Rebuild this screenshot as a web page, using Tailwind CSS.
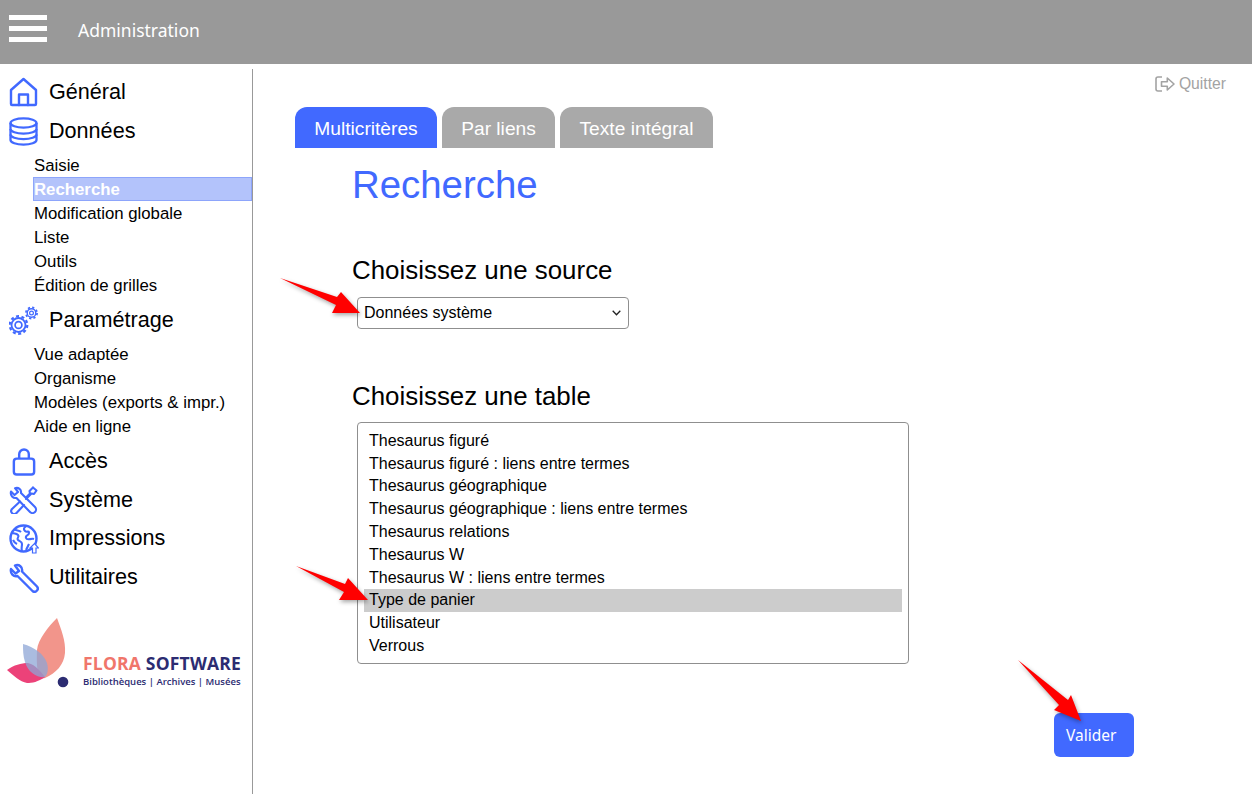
<!DOCTYPE html>
<html lang="fr">
<head>
<meta charset="utf-8">
<script src="https://cdn.jsdelivr.net/npm/@tailwindcss/browser@4"></script>
<title>Administration</title>
</head>
<body class="bg-white text-black overflow-hidden font-['Liberation_Sans',Arial,sans-serif]">
<div class="relative w-[1252px] h-[794px] overflow-hidden">
  <header class="h-16 bg-[#999999] flex items-center">
    <div class="ml-[9px] w-[38px] flex flex-col gap-[6px] -mt-[8px]">
      <span class="block h-[5px] bg-white"></span>
      <span class="block h-[5px] bg-white"></span>
      <span class="block h-[5px] bg-white"></span>
    </div>
    <span class="ml-[31px] -mt-[4px] text-white text-[17.5px] font-['Noto_Sans',sans-serif]">Administration</span>
  </header>
  <div class="flex h-[730px]">
    <aside class="w-[253px] shrink-0 mt-[5px] border-r border-[#999999] text-[#000]">
      <div class="h-[39px] mt-[2px] flex items-center">
        <svg class="ml-[9px] w-[29px] h-[30px] text-[#4169ff] mt-[3px]" viewBox="0 0 29 30" fill="none" stroke="currentColor" stroke-width="2.4" stroke-linejoin="round" stroke-linecap="round"><path d="M2 27V13L14.5 2 27 13V27a1 1 0 0 1-1 1H3a1 1 0 0 1-1-1z"/><path d="M10 28V17.5h9V28"/></svg>
        <span class="ml-[11px] text-[21.6px] mt-[4px]">Général</span>
      </div>
      <div class="h-[39px] flex items-center">
        <svg class="ml-[9px] w-[29px] h-[29px] text-[#4169ff] mt-[3px]" viewBox="0 0 29 29" fill="none" stroke="currentColor" stroke-width="2.3"><ellipse cx="14.5" cy="6" rx="13" ry="4.6"/><path d="M1.5 6v17c0 2.6 5.8 4.6 13 4.6s13-2 13-4.6V6"/><path d="M1.5 12c0 2.6 5.8 4.6 13 4.6s13-2 13-4.6"/><path d="M1.5 17.5c0 2.6 5.8 4.6 13 4.6s13-2 13-4.6"/></svg>
        <span class="ml-[11px] text-[21.6px] mt-[4px]">Données</span>
      </div>
      <ul class="text-[16.8px] leading-[26px] mt-[4px] ml-[33px]">
        <li class="h-6 pl-px">Saisie</li>
        <li class="h-6 bg-[#b3c3fb] border border-[#8da5fb] text-white font-bold leading-[24px]">Recherche</li>
        <li class="h-6 pl-px">Modification globale</li>
        <li class="h-6 pl-px">Liste</li>
        <li class="h-6 pl-px">Outils</li>
        <li class="h-6 pl-px">Édition de grilles</li>
      </ul>
      <div class="h-[39px] mt-[3px] flex items-center">
        <svg class="ml-[9px] w-[30px] h-[30px] text-[#4169ff]" viewBox="0 0 30 30" fill="none" stroke="currentColor"><circle cx="9.5" cy="20" r="3.4" stroke-width="1.7"/><circle cx="9.500" cy="20" r="7" stroke-width="1.8"/><circle cx="9.500" cy="20" r="8.800" stroke-width="2.200" stroke-dasharray="3 2.530"/><circle cx="22.500" cy="8" r="1.900" stroke-width="1.200"/><circle cx="22.500" cy="8" r="4.300" stroke-width="1.400"/><circle cx="22.500" cy="8" r="5.600" stroke-width="1.700" stroke-dasharray="2.200 2.200"/></svg>
        <span class="ml-[10px] text-[21.6px] mt-[2px]">Paramétrage</span>
      </div>
      <ul class="text-[16.8px] leading-[26px] mt-[3px] ml-[33px]">
        <li class="h-6 pl-px">Vue adaptée</li>
        <li class="h-6 pl-px">Organisme</li>
        <li class="h-6 pl-px">Modèles (exports &amp; impr.)</li>
        <li class="h-6 pl-px">Aide en ligne</li>
      </ul>
      <div class="h-[39px] mt-[3px] flex items-center">
        <svg class="ml-[12px] w-[24px] h-[28px] text-[#4169ff] mt-[3px]" viewBox="0 0 24 29" fill="none" stroke="currentColor" stroke-width="2.5" stroke-linejoin="round"><rect x="1.5" y="11" width="21" height="16.5" rx="3"/><path d="M7 11V6.500a5 5 0 0 1 10 0V11"/></svg>
        <span class="ml-[13px] text-[21.6px] mt-[2px]">Accès</span>
      </div>
      <div class="h-[39px] flex items-center">
        <svg class="ml-[9px] w-[29px] h-[28px] text-[#4169ff] mt-[1px]" viewBox="0 0 29 28" fill="none" stroke="currentColor" stroke-width="2.1" stroke-linejoin="round" stroke-linecap="round"><path d="M2 5.500 5.500 9 9 6 6 2.200C9.500 1 12.500 3.500 12 7l14 14a3.500 3.500 0 0 1-5 5L7.500 12C4 12.500 1 9.500 2 5.500z"/><path d="M24 1.500 27.500 4.500 25 8 22.500 7.500 17 13"/><path d="M24 1.500 20.500 5 21 7.500 17 11.500"/><path d="M11 15.500 3 23a3 3 0 0 0 4.500 4L15 19"/></svg>
        <span class="ml-[11px] text-[21.6px] mt-[2px]">Système</span>
      </div>
      <div class="h-[38px] flex items-center">
        <svg class="ml-[9px] w-[30px] h-[30px] text-[#4169ff] mt-[2px]" viewBox="0 0 30 30" fill="none" stroke="currentColor" stroke-width="2.400"><circle cx="14.500" cy="14.500" r="13"/><path d="M3 9c3 1 4 0 6 2s-2 3 0 5 4 1 4 4-1 4 0 7" stroke-width="2.100"/><path d="M17 2c-2 2-3 3-1 5s4-1 4 2-4 2-3 5 5 0 8 1" stroke-width="2.100"/><path d="M5 5c2 2 5 1 7 3M8 20c-2-1-3-2-4-4M20 20c-1 2-2 4-3 6" stroke-width="2.100"/><path d="M25.500 19.500 29.500 24h-2.500v5h-3.500v-5h-2.500z" fill="#fff" stroke-width="1.200"/></svg>
        <span class="ml-[10px] text-[21.6px]">Impressions</span>
      </div>
      <div class="h-[39px] flex items-center">
        <svg class="ml-[9px] w-[30px] h-[30px] text-[#4169ff] mt-[2px]" viewBox="0 0 30 30" fill="none" stroke="currentColor" stroke-width="2.400" stroke-linejoin="round"><path d="M2 6l4.500 4.500L10 8 6 2.500C10 1 14 4 13 8.500L28 23.500a3.200 3.200 0 0 1-4.500 4.500L8.500 13C4.500 14 1 10.500 2 6z"/></svg>
        <span class="ml-[10px] text-[21.6px] mt-[2px]">Utilitaires</span>
      </div>
      <div class="mt-[22px] ml-[6px] flex h-[74px]">
        <svg class="w-[70px] h-[74px] shrink-0" viewBox="0 0 70 74">
          <path d="M51 0C55 11 60 23 59 35 58 47 50 55 39 60 33 62 30 55 31 32 32 21 43 8 51 0z" fill="#f2958b"/>
          <path d="M1 52C8 47 15 45 22 45 30 47 35 54 39 59 32 64 26 65 21 65 14 64 7 57 1 52z" fill="#ec4279"/>
          <path d="M17 26C28 29 38 36 41 45 43 52 41 57 39 59 32 60 22 55 19 44 17 38 17 32 17 26z" fill="#8ea6d6" fill-opacity=".75"/>
          <circle cx="57" cy="64" r="5.300" fill="#2c2c72"/>
        </svg>
        <div class="ml-[7px] mt-[35px]">
          <div class="text-[17.500px] leading-[20px] font-bold tracking-[.2px] font-['Open_Sans',sans-serif] whitespace-nowrap"><span class="text-[#f0766b]">FLORA</span> <span class="text-[#2c2c72]">SOFTWARE</span></div>
          <div class="mt-[2px] text-[9.500px] leading-[14px] font-semibold text-[#2c2c72] font-['Open_Sans',sans-serif] whitespace-nowrap">Bibliothèques | Archives | Musées</div>
        </div>
      </div>
    </aside>
    <main class="flex-1 relative">
      <div class="flex justify-end pr-[26px] h-[43px] pt-[10px]">
        <div class="flex items-center gap-[4px] text-[#a3a3a3] text-[15.700px] h-5">
          <svg class="w-5 h-[18px]" viewBox="0 0 20 18" fill="none" stroke="currentColor" stroke-width="1.600" stroke-linejoin="round"><path d="M7 2H3a2 2 0 0 0-2 2v10a2 2 0 0 0 2 2h4"/><path d="M6.500 6.800h5.800V3L19 9l-6.700 6v-3.800H6.500z"/></svg>
          <span>Quitter</span>
        </div>
      </div>
      <nav class="flex gap-[5px] ml-[42px] text-[19.2px] text-white">
        <div class="h-[41px] w-[142px] pt-[3px] rounded-t-[12px] bg-[#4169ff] flex items-center justify-center">Multicritères</div>
        <div class="h-[41px] w-[113px] pt-[3px] rounded-t-[12px] bg-[#a9a9a9] flex items-center justify-center">Par liens</div>
        <div class="h-[41px] w-[153px] pt-[3px] rounded-t-[12px] bg-[#a9a9a9] flex items-center justify-center">Texte intégral</div>
      </nav>
      <section class="ml-[99px]">
        <h1 class="text-[38.400px] leading-[42px] mt-[16px] text-[#4169ff]">Recherche</h1>
        <h2 class="text-[25.900px] leading-[30px] mt-[49px]">Choisissez une source</h2>
        <div class="relative ml-[5px] mt-[12px] w-[272px] h-[32px]">
          <select class="block appearance-none w-full h-full border border-[#8f8f8f] rounded-[4px] bg-white text-[16px] pl-[6px]">
            <option>Données système</option>
          </select>
          <svg class="absolute right-[8px] top-[13px] w-[9px] h-[6px] pointer-events-none" viewBox="0 0 9 6" fill="none" stroke="#222222" stroke-width="1.300"><path d="M.7 .8 4.500 4.800 8.300 .8"/></svg>
        </div>
        <h2 class="text-[25.900px] leading-[30px] mt-[52px]">Choisissez une table</h2>
        <div class="ml-[5px] mt-[11px] w-[552px] h-[242px] border border-[#8f8f8f] rounded-[4px] pt-[6.800px] px-[6px] text-[16px] leading-[22.800px]">
          <div class="pl-[5px]">Thesaurus figuré</div>
          <div class="pl-[5px]">Thesaurus figuré : liens entre termes</div>
          <div class="pl-[5px]">Thesaurus géographique</div>
          <div class="pl-[5px]">Thesaurus géographique : liens entre termes</div>
          <div class="pl-[5px]">Thesaurus relations</div>
          <div class="pl-[5px]">Thesaurus W</div>
          <div class="pl-[5px]">Thesaurus W : liens entre termes</div>
          <div class="pl-[5px] bg-[#cccccc]">Type de panier</div>
          <div class="pl-[5px]">Utilisateur</div>
          <div class="pl-[5px]">Verrous</div>
        </div>
      </section>
      <div class="ml-[801px] mt-[49px] w-20 h-[44px] pt-[2px] rounded-[6px] bg-[#4169ff] text-white text-[15.500px] font-['Noto_Sans',sans-serif] flex items-center pl-[12px]">Valider</div>
    </main>
  </div>
  <svg class="absolute left-0 top-0 w-[1252px] h-[794px] pointer-events-none drop-shadow-[1px_2px_2px_rgba(0,0,0,0.35)]" viewBox="0 0 1252 794">
    <polygon fill="#ff0000" points="280,278 337,297 341,292 360,313 332,313 336,305"/>
    <polygon fill="#ff0000" points="296,566 345,584 348,578 368,600 339,600 344,592"/>
    <polygon fill="#ff0000" points="1018,660 1068,700 1071,695 1081,721 1054,710 1059,705"/>
  </svg>
</div>
</body>
</html>
